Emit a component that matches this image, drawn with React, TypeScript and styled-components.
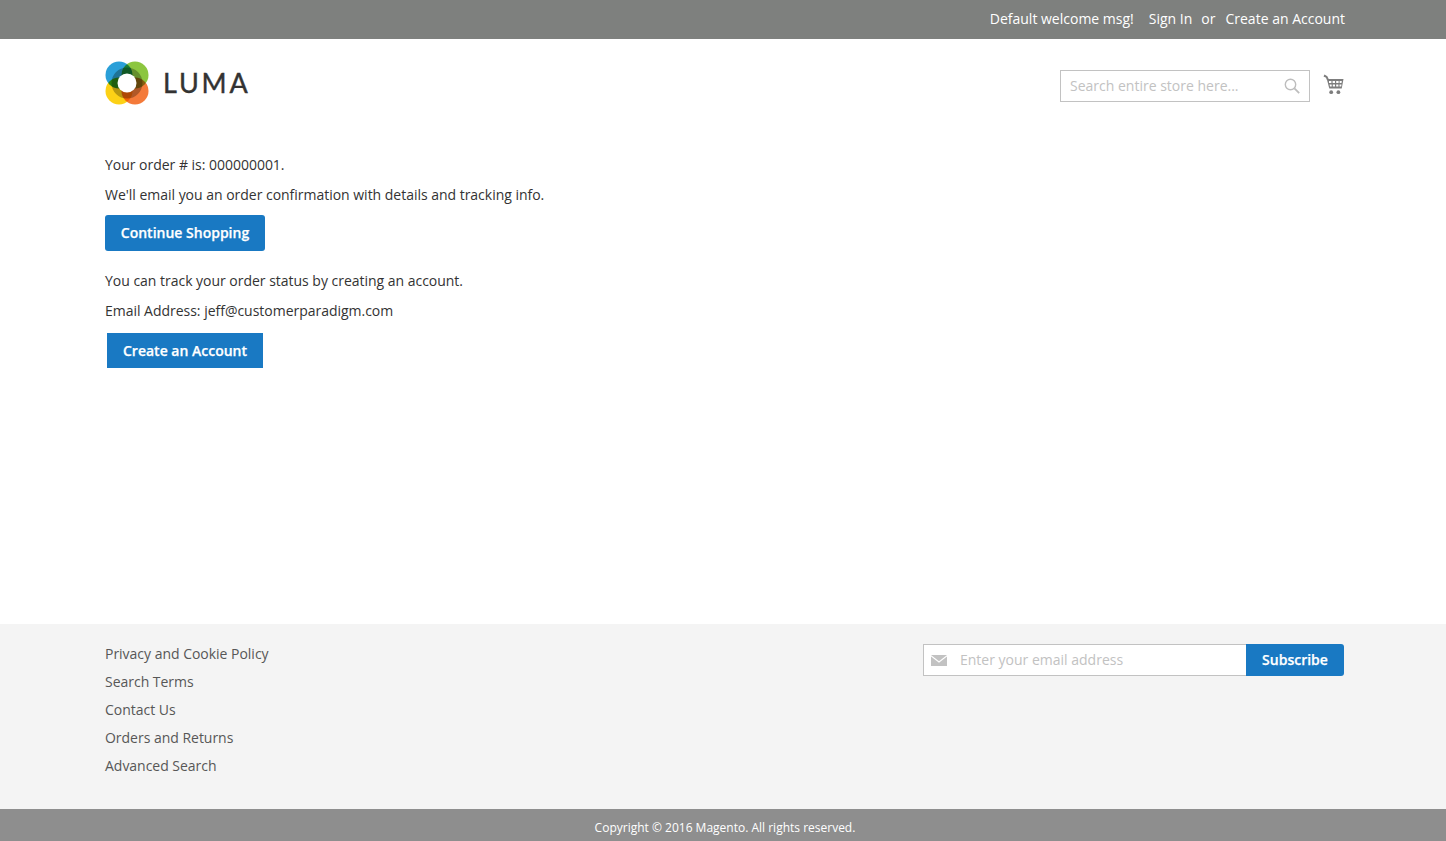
import React from "react";
import styled, { createGlobalStyle } from "styled-components";

const GlobalStyle = createGlobalStyle`
  html, body {
    margin: 0;
    padding: 0;
    background: #fff;
  }
  body {
    font-family: "Open Sans", "Liberation Sans", sans-serif;
    font-size: 14px;
    color: #333;
  }
  * {
    box-sizing: border-box;
  }
`;

const footerLinks = [
  "Privacy and Cookie Policy",
  "Search Terms",
  "Contact Us",
  "Orders and Returns",
  "Advanced Search",
];

const Logo = () => (
  <LogoWrap>
    <LogoMark width="44" height="44" viewBox="0 0 44 44">
      <circle cx="14" cy="14" r="13.5" fill="#2a9fd8" />
      <circle cx="30" cy="14" r="13.5" fill="#8cc63f" />
      <circle cx="14" cy="30" r="13.5" fill="#fcd116" />
      <circle cx="30" cy="30" r="13.5" fill="#f47a3a" />
      <circle cx="22" cy="22" r="15.5" fill="#b8b8b0" />
      <LogoHole cx="22" cy="22" r="9.5" fill="#fff" />
    </LogoMark>
    <LogoText>LUMA</LogoText>
  </LogoWrap>
);

const CartIcon = () => (
  <svg width="21" height="21" viewBox="0 0 21 21" fill="none">
    <path d="M1 1.5l2.6 1.4 1.4 3" stroke="#7d7d7d" strokeWidth="2" />
    <path d="M3.8 5h16.7l-1.8 9.5H6.3z" fill="#7d7d7d" />
    <path d="M6 7h2.4v2H6zM9.6 7H12v2H9.6zM13.2 7h2.4v2h-2.4zM16.6 7h2.2l-.3 2h-1.9zM6.6 10.6h2.1v2H7zM9.8 10.6H12v2H9.8zM13.2 10.6h2.2v2h-2.2zM16.5 10.6h2l-.3 2h-1.7z" fill="#fff" />
    <circle cx="8.2" cy="18.2" r="1.9" fill="#7d7d7d" />
    <circle cx="15.4" cy="18.2" r="1.9" fill="#7d7d7d" />
  </svg>
);

const SearchIcon = () => (
  <svg width="16" height="16" viewBox="0 0 16 16" fill="none" stroke="#bdbdbd" strokeWidth="1.4">
    <circle cx="6.5" cy="6.5" r="5.2" />
    <path d="M10.4 10.4l4.8 4.8" strokeWidth="1.8" />
  </svg>
);

const MailIcon = () => (
  <svg width="16" height="11" viewBox="0 0 16 11">
    <path d="M0 0h16L8 6.2z" fill="#c2c2c2" />
    <path d="M0 1.6v9.4h16V1.6L8 7.8z" fill="#c2c2c2" />
  </svg>
);

export default function App() {
  return (
    <>
      <GlobalStyle />
      <Page>
        <TopBar>
          <Welcome>Default welcome msg!</Welcome>
          <TopLink>Sign In</TopLink>
          <Or>or</Or>
          <TopLink>Create an Account</TopLink>
        </TopBar>
        <Header>
          <Logo />
          <HeaderRight>
            <SearchBox>
              <SearchPlaceholder>Search entire store here...</SearchPlaceholder>
              <SearchIcon />
            </SearchBox>
            <CartSlot>
              <CartIcon />
            </CartSlot>
          </HeaderRight>
        </Header>
        <Main>
          <Line>Your order # is: 000000001.</Line>
          <Line>We'll email you an order confirmation with details and tracking info.</Line>
          <RoundButton>Continue Shopping</RoundButton>
          <Line>You can track your order status by creating an account.</Line>
          <Line>Email Address: jeff@customerparadigm.com</Line>
          <SquareButton>Create an Account</SquareButton>
        </Main>
        <Footer>
          <FooterLinks>
            {footerLinks.map((link) => (
              <FooterLink key={link}>{link}</FooterLink>
            ))}
          </FooterLinks>
          <Subscribe>
            <EmailField>
              <MailIcon />
              <EmailPlaceholder>Enter your email address</EmailPlaceholder>
            </EmailField>
            <SubscribeButton>Subscribe</SubscribeButton>
          </Subscribe>
        </Footer>
        <Copyright>Copyright © 2016 Magento. All rights reserved.</Copyright>
      </Page>
    </>
  );
}

const Page = styled.div`
  display: flex;
  flex-direction: column;
  height: 841px;
  overflow: hidden;
`;

const TopBar = styled.div`
  height: 39px;
  flex: none;
  background: #7e807e;
  color: #fff;
  display: flex;
  align-items: center;
  justify-content: flex-end;
  padding: 0 101px 2px 105px;
  line-height: 20px;
`;

const Welcome = styled.span`
  margin-right: 15px;
`;

const TopLink = styled.span``;

const Or = styled.span`
  margin: 0 10px 0 9px;
`;

const Header = styled.div`
  flex: none;
  height: 87px;
  display: flex;
  justify-content: space-between;
  padding: 22px 102px 0 105px;
`;

const LogoWrap = styled.div`
  display: flex;
  align-items: center;
  height: 44px;
`;

const LogoMark = styled.svg`
  isolation: isolate;

  circle {
    mix-blend-mode: multiply;
  }
`;

const LogoHole = styled.circle`
  && {
    mix-blend-mode: normal;
  }
`;

const LogoText = styled.span`
  margin: 0 0 2px 14px;
  font-family: "Lato", "Liberation Sans", sans-serif;
  font-size: 27px;
  font-weight: 400;
  letter-spacing: 2.8px;
  color: #333;
  -webkit-text-stroke: 0.4px #333;
`;

const HeaderRight = styled.div`
  display: flex;
  align-items: flex-start;
  gap: 13px;
`;

const SearchBox = styled.div`
  width: 250px;
  height: 32px;
  margin-top: 9px;
  border: 1px solid #c2c2c2;
  background: #fff;
  display: flex;
  align-items: center;
  justify-content: space-between;
  padding: 0 9px;
`;

const SearchPlaceholder = styled.span`
  color: #c2c2c2;
  margin-bottom: 2px;
`;

const CartSlot = styled.div`
  margin-top: 13px;
`;

const Main = styled.div`
  flex: 1;
  padding: 29px 105px 0;
`;

const Line = styled.p`
  margin: 0 0 10px;
  line-height: 20px;
  letter-spacing: -0.02px;
`;

const BlueButton = styled.div`
  background: #1979c3;
  color: #fff;
  font-weight: 600;
  -webkit-text-stroke: 0.25px #fff;
  display: flex;
  align-items: center;
  justify-content: center;
`;

const RoundButton = styled(BlueButton)`
  width: 160px;
  height: 36px;
  border-radius: 3px;
  margin: 0 0 20px;
  padding-bottom: 2px;
`;

const SquareButton = styled(BlueButton)`
  width: 156px;
  height: 35px;
  margin: 12px 0 0 2px;
`;

const Footer = styled.div`
  flex: none;
  height: 185px;
  background: #f4f4f4;
  display: flex;
  justify-content: space-between;
  padding: 16px 102px 0 105px;
`;

const FooterLinks = styled.div`
  display: flex;
  flex-direction: column;
`;

const FooterLink = styled.div`
  height: 28px;
  line-height: 28px;
  color: #575757;
  letter-spacing: -0.02px;
`;

const Subscribe = styled.div`
  display: flex;
  width: 421px;
  height: 32px;
  margin-top: 4px;
`;

const EmailField = styled.div`
  flex: 1;
  background: #fff;
  border: 1px solid #c2c2c2;
  border-right: 0;
  display: flex;
  align-items: center;
  padding-left: 7px;
`;

const EmailPlaceholder = styled.span`
  color: #c2c2c2;
  margin: 0 0 2px 13px;
`;

const SubscribeButton = styled(BlueButton)`
  width: 98px;
  border-radius: 0 3px 3px 0;
  padding-bottom: 2px;
`;

const Copyright = styled.div`
  flex: none;
  height: 32px;
  background: #8e8e8e;
  color: #fff;
  font-size: 12px;
  display: flex;
  align-items: center;
  justify-content: center;
  padding: 4px 0 0 4px;
`;
